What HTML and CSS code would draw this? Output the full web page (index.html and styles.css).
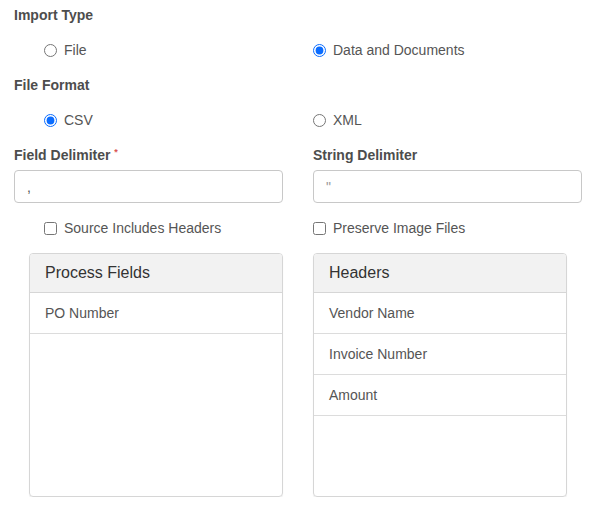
FILE: index.html
```html
<!DOCTYPE html>
<html lang="en">
  <head>
    <meta charset="UTF-8" />
    <meta name="viewport" content="width=device-width, initial-scale=1.0" />
    <title>Import Settings</title>
    <link rel="stylesheet" href="styles.css">
  </head>
  <body>
    <form class="import-form">
      <div class="field-label">Import Type</div>

      <div class="row">
        <label class="choice indent">
          <input type="radio" name="importType" value="file" />
          <span>File</span>
        </label>
        <label class="choice">
          <input type="radio" name="importType" value="data" checked />
          <span>Data and Documents</span>
        </label>
      </div>

      <div class="field-label">File Format</div>

      <div class="row">
        <label class="choice indent">
          <input type="radio" name="fileFormat" value="csv" checked />
          <span>CSV</span>
        </label>
        <label class="choice">
          <input type="radio" name="fileFormat" value="xml" />
          <span>XML</span>
        </label>
      </div>

      <div class="row">
        <div class="group">
          <div class="field-label">Field Delimiter <span class="required">*</span></div>
          <input class="text-input" type="text" value="," />
        </div>
        <div class="group">
          <div class="field-label">String Delimiter</div>
          <input class="text-input light" type="text" value="&quot;" />
        </div>
      </div>

      <div class="row">
        <label class="choice indent">
          <input type="checkbox" name="includesHeaders" />
          <span>Source Includes Headers</span>
        </label>
        <label class="choice">
          <input type="checkbox" name="preserveImages" />
          <span>Preserve Image Files</span>
        </label>
      </div>

      <div class="row">
        <div class="panel panel-left">
          <div class="panel-heading">Process Fields</div>
          <ul class="panel-list">
            <li>PO Number</li>
          </ul>
        </div>
        <div class="panel">
          <div class="panel-heading">Headers</div>
          <ul class="panel-list">
            <li>Vendor Name</li>
            <li>Invoice Number</li>
            <li>Amount</li>
          </ul>
        </div>
      </div>
    </form>
  </body>
</html>
```

FILE: styles.css
```css
body {
  margin: 0;
  padding: 5px 12px 0 14px;
  background-color: #fff;
  color: #555;
  font-family: "Liberation Sans", Arial, sans-serif;
  font-size: 14px;
  line-height: 20px;
}

.import-form {
  display: flex;
  flex-direction: column;
  gap: 15px;
}

.field-label {
  font-weight: bold;
  color: #4d4d4d;
  height: 20px;
}

.required {
  color: #d9534f;
  font-size: 9px;
  vertical-align: top;
  position: relative;
  top: -3px;
}

.row {
  display: grid;
  grid-template-columns: 269px 269px;
  column-gap: 30px;
}

.group {
  display: flex;
  flex-direction: column;
  gap: 5px;
}

.choice {
  display: flex;
  align-items: center;
  gap: 7px;
  height: 20px;
  color: #555;
}

.choice input {
  margin: 0;
  width: 13px;
  height: 13px;
  accent-color: #0a6cff;
}

.indent {
  padding-left: 30px;
}

.text-input {
  box-sizing: border-box;
  height: 33px;
  width: 100%;
  margin: 0;
  padding: 0 12px;
  border: 1px solid #c8c8c8;
  border-radius: 4px;
  font-family: "Liberation Sans", Arial, sans-serif;
  font-size: 14px;
  color: #555;
}

.text-input.light {
  color: #999;
}

.panel {
  box-sizing: border-box;
  width: 254px;
  height: 244px;
  border: 1px solid #d6d6d6;
  border-radius: 4px;
  box-shadow: 0 1px 1px rgba(0, 0, 0, 0.08);
  overflow: hidden;
}

.panel-left {
  margin-left: 15px;
}

.panel-heading {
  height: 38px;
  padding: 0 15px;
  display: flex;
  align-items: center;
  background: #f2f2f2;
  border-bottom: 1px solid #d6d6d6;
  color: #333;
  font-size: 16px;
}

.panel-list {
  list-style: none;
  margin: 0;
  padding: 0;
}

.panel-list li {
  height: 40px;
  padding: 0 15px;
  display: flex;
  align-items: center;
  border-bottom: 1px solid #dcdcdc;
  color: #555;
}
```
